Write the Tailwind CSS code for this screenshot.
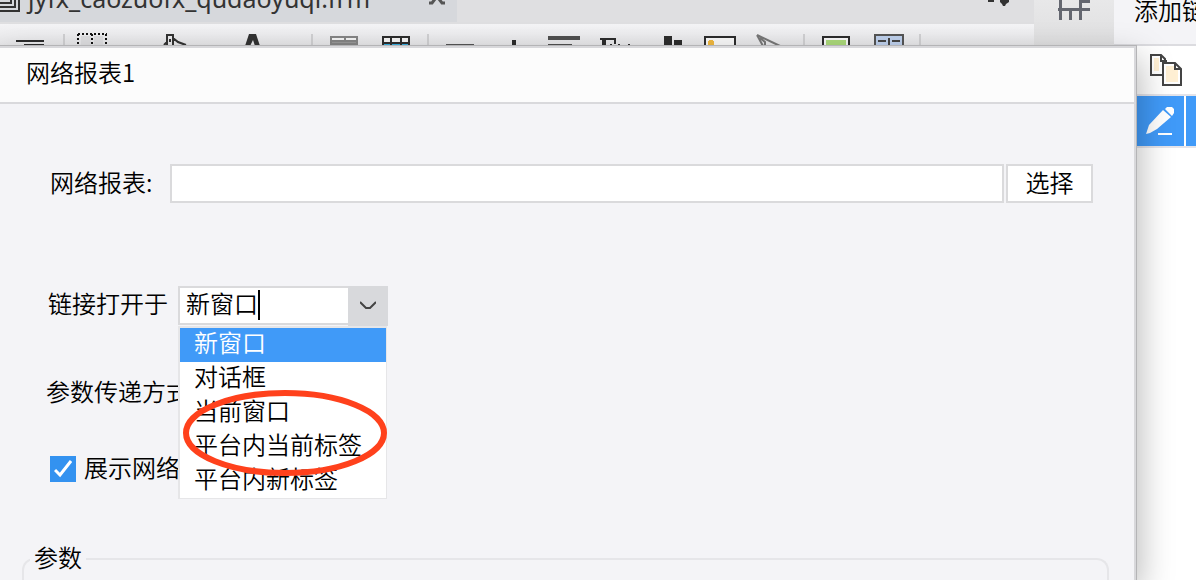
<!DOCTYPE html>
<html lang="zh-CN">
<head>
  <meta charset="UTF-8" />
  <meta name="viewport" content="width=device-width, initial-scale=1.0" />
  <title>网络报表1</title>
  <script src="https://cdn.jsdelivr.net/npm/@tailwindcss/browser@4"></script>
</head>
<body class="relative h-screen overflow-hidden bg-white font-['Noto_Sans_CJK_SC',sans-serif] font-[350] text-2xl leading-8 text-black">

  <!-- Designer window -->
  <div class="flex h-full">
    <main class="flex-1 min-w-0 bg-white">
      <!-- File tabs -->
      <div class="flex h-6 bg-[#dfdfe1] overflow-hidden">
        <div class="flex items-end w-[457px] h-[22px] bg-[#d6d8dc] text-[#333]">
          <svg class="w-5 h-[22px] shrink-0" viewBox="0 0 20 22" fill="none" stroke="#333" stroke-width="2" shape-rendering="crispEdges">
            <path d="M0 11H19V0M0 7H15V0M0 3H11V0" />
          </svg>
          <span class="ml-2 mb-3 text-[25px] leading-6 font-['Noto_Sans'] font-normal">jyfx_caozuofx_qudaoyuqi.frm</span>
          <button class="ml-auto mr-3 h-[22px]" aria-label="关闭">
            <svg class="w-4 h-[22px]" viewBox="0 0 16 22" fill="none" stroke="#555" stroke-width="3"><path d="M0 3H3L6 -1M16 3H13L10 -1" /></svg>
          </button>
        </div>
        <button class="ml-auto mr-6 h-[22px]" aria-label="更多">
          <svg class="w-6 h-[22px]" viewBox="0 0 24 22" fill="#333"><path d="M2 0h6v2H2zM14 0h9v2l-3 2-1 2h-2l-1-2-2-2z" /></svg>
        </button>
      </div>

      <!-- Toolbar -->
      <div class="flex h-[22px] pl-4 overflow-hidden bg-linear-to-b from-[#f4f4f6] to-[#e6e6e8]">
        <button aria-label="右对齐"><svg class="w-7 h-[22px]" viewBox="0 0 28 22" fill="#2d2d2d"><path d="M0 16h28v2H0zM8 20h20v2H8z" /></svg></button>
        <i class="ml-[19px] mt-[10px] w-0.5 bg-[#d0d0d2]"></i>
        <button class="ml-3" aria-label="边框">
          <svg class="w-[30px] h-[22px]" viewBox="0 0 30 22" shape-rendering="crispEdges"><path d="M4 12h10v10H4zM17 12h9v10h-9z" fill="#dedee0" /><path d="M1 10H30M1 10V22M15 10V22M29 10V22" fill="none" stroke="#111" stroke-width="2" stroke-dasharray="2 2" /></svg>
        </button>
        <button class="ml-14" aria-label="背景色">
          <svg class="w-[25px] h-[22px]" viewBox="0 0 25 22" fill="none" stroke="#333" stroke-width="2"><path d="M1 21L4 18V11H10V22M4 18V22M10 14L15 18L23 21" /><path d="M7 15V18" /></svg>
        </button>
        <button class="ml-[57px]" aria-label="字体颜色">
          <svg class="w-4 h-[22px]" viewBox="0 0 16 22" fill="#333"><path d="M4 10h7l4 12h-5l-2-6-3 6H0z" /></svg>
        </button>
        <i class="ml-[50px] mt-[10px] w-0.5 bg-[#d0d0d2]"></i>
        <button class="ml-[17px]" aria-label="合并单元格">
          <svg class="w-7 h-[22px]" viewBox="0 0 28 22"><path d="M0 12h28v10H0z" fill="#858585" /><path d="M2 14h12v2H2zM16 14h10v2H16z" fill="#f4f4f4" /><path d="M2 18h24v1H2z" fill="#999" /></svg>
        </button>
        <button class="ml-6" aria-label="取消合并">
          <svg class="w-7 h-[22px]" viewBox="0 0 28 22"><path d="M0 12h28v10H0z" fill="#2d2d2d" /><path d="M2 14h6v4H2zM10 14h8v4h-8zM20 14h6v4h-6z" fill="#f4f4f4" /><path d="M2 20h6v2H2zM10 20h8v2h-8zM20 20h6v2h-6z" fill="#34aee0" /></svg>
        </button>
        <i class="ml-[17px] mt-[10px] w-0.5 bg-[#d0d0d2]"></i>
        <button class="ml-[17px]" aria-label="横线"><svg class="w-7 h-[22px]" viewBox="0 0 28 22" fill="#555"><path d="M0 20h28v2H0z" /></svg></button>
        <button class="ml-[38px]" aria-label="竖线"><svg class="w-1 h-[22px]" viewBox="0 0 4 22" fill="#2d2d2d"><path d="M0 16h4v6H0z" /></svg></button>
        <button class="ml-8" aria-label="左对齐"><svg class="w-8 h-[22px]" viewBox="0 0 32 22" fill="#505050"><path d="M0 12h32v4H0zM0 20h24v2H0z" /></svg></button>
        <button class="ml-5" aria-label="文本">
          <svg class="w-[30px] h-[22px]" viewBox="0 0 30 22" fill="#2d2d2d"><path d="M0 14h16v6h-2v-4H6v6H2v-6H0zM10 20h2v2h-2zM18 20h2v2h-2zM28 20h2v2h-2z" /></svg>
        </button>
        <button class="ml-[34px]" aria-label="图表"><svg class="w-[18px] h-[22px]" viewBox="0 0 18 22" fill="#2d2d2d"><path d="M0 12h8v10H0zM10 16h8v6h-8z" /></svg></button>
        <button class="ml-[22px]" aria-label="图片">
          <svg class="w-8 h-[22px]" viewBox="0 0 32 22"><path d="M1 24V13H31V24" fill="#f8f8f8" stroke="#2d2d2d" stroke-width="2" /><path d="M5 16h4v1h1v4H9v1H5v-1H4v-4h1z" fill="#f0b840" /></svg>
        </button>
        <button class="ml-5" aria-label="斜线">
          <svg class="w-[26px] h-[22px]" viewBox="0 0 26 22" fill="none" stroke="#777" stroke-width="2"><path d="M1 11L7 22M1 11L24 22M4 14L9 18V22" /></svg>
        </button>
        <i class="ml-[21px] mt-[10px] w-0.5 bg-[#d0d0d2]"></i>
        <button class="ml-[17px]" aria-label="控件">
          <svg class="w-7 h-[22px]" viewBox="0 0 28 22"><path d="M1 24V13H27V24" fill="#f8f8f8" stroke="#2d2d2d" stroke-width="2" /><path d="M4 16h20v6H4z" fill="#abd97a" /></svg>
        </button>
        <button class="ml-6" aria-label="参数面板">
          <svg class="w-[30px] h-[22px]" viewBox="0 0 30 22"><path d="M1 24V11H29V24" fill="#bed0ec" stroke="#555" stroke-width="2" /><path d="M4 16h8v2H4zM18 16h8v2h-8zM14 14h2v8h-2z" fill="#444" /></svg>
        </button>
        <i class="ml-[15px] mt-[10px] w-0.5 bg-[#d0d0d2]"></i>
      </div>
    </main>

    <div class="w-20 shrink-0 h-[46px] bg-linear-to-b from-[#e8e8e9] to-[#dfdfe0]">
      <svg class="ml-6 w-8 h-5" viewBox="0 0 32 20" fill="none" stroke="#646770" stroke-width="3" shape-rendering="crispEdges"><path d="M2 0V20M0 9H32M12 9V20M22 0V20M21 1H32" /></svg>
    </div>

    <!-- Property panel -->
    <aside class="w-[82px] shrink-0 bg-white overflow-hidden">
      <div class="h-[46px] pl-5 border-b-2 border-[#dcdce0] bg-[#f4f4f7] leading-5 whitespace-nowrap">添加链接</div>
      <div class="flex items-center h-12 pl-9">
        <button aria-label="复制">
          <svg class="w-8 h-8" viewBox="0 0 32 32" stroke="#444" stroke-width="2"><path d="M1 1H11L15 5V21H1Z" fill="#fff" /><path d="M4 4h5v13H4z" fill="#fff0d4" stroke="none" /><path d="M11 1V7H17" fill="none" /><path d="M13 9H25L31 15V31H13Z" fill="#fff" /><path d="M16 12h8v4h4v12H16z" fill="#fff0d4" stroke="none" /><path d="M25 9V15H31" fill="none" /></svg>
        </button>
      </div>
      <div class="flex h-[54px] pl-[22px] border-y-2 border-[#e4e4ea]">
        <button class="w-12 bg-[#409af8] flex items-center justify-center" aria-label="编辑">
          <svg class="w-7 h-7" viewBox="0 0 28 28" fill="#fff"><path d="M0 27L3 18L17 3L25 10L11 22L4 26ZM19 2L21 0H26L28 2V6L26 9ZM12 26h14v2H12z" /></svg>
        </button>
        <div class="ml-0.5 flex-1 bg-[#409af8]"></div>
      </div>
    </aside>
  </div>

  <!-- Hyperlink dialog -->
  <div role="dialog" aria-labelledby="dialog-title" class="absolute top-[46px] left-0 right-[60px] bottom-0 flex flex-col border-t-2 border-r-2 border-[#d8d8db] bg-[#f4f4f7] shadow-[0_0_0_1px_#b4b4b6,4px_12px_32px_rgba(0,0,0,0.28)]">
    <header class="flex items-center h-14 shrink-0 pl-[26px] pb-1.5 border-b-2 border-[#d9d9dc] bg-[#fcfcfc]">
      <h1 id="dialog-title">网络报表1</h1>
    </header>

    <form class="flex-1 min-h-0 flex flex-col pl-12 pr-[41px] pt-15">
      <div class="flex items-center h-[39px] shrink-0">
        <label for="report" class="w-[122px] pl-0.5 pb-1 whitespace-nowrap">网络报表:</label>
        <input id="report" type="text" class="flex-1 min-w-0 h-full px-2 border-2 border-[#dadadc] bg-white">
        <button type="button" class="ml-0.5 w-[87px] h-full pb-1 border-2 border-[#dadadc] bg-white leading-8">选择</button>
      </div>

      <div class="flex items-center h-[39px] shrink-0 mt-[83px]">
        <label for="target" class="w-[130px] pb-1.5 whitespace-nowrap">链接打开于</label>
        <div class="relative flex w-[210px] h-full">
          <input id="target" type="text" role="combobox" aria-expanded="true" aria-controls="target-list" value="新窗口" class="w-[170px] h-full pl-1.5 pb-1.5 border-2 border-r-0 border-[#dadadc] bg-white">
          <span class="absolute left-20 top-1 w-0.5 h-[30px] bg-black"></span>
          <button type="button" class="flex-1 h-10 flex items-center justify-center bg-[#d8d9dc]" aria-label="展开">
            <svg class="w-4 h-3" viewBox="0 0 16 12" fill="none" stroke="#444" stroke-width="2"><path d="M0 2L6 8H10L16 2" /></svg>
          </button>
          <ul id="target-list" role="listbox" class="absolute z-10 top-10 left-0 w-[209px] border-l-2 border-r border-b border-t-2 border-[#e6e6e8] bg-white leading-7">
            <li role="option" aria-selected="true" class="h-[34px] pl-3.5 bg-[#409af8] text-white">新窗口</li>
            <li role="option" class="h-[34px] pl-3.5">对话框</li>
            <li role="option" class="h-[34px] pl-3.5">当前窗口</li>
            <li role="option" class="h-[34px] pl-3.5">平台内当前标签</li>
            <li role="option" class="h-[34px] pl-3.5">平台内新标签</li>
          </ul>
          <!-- Marker round the two options -->
          <svg class="absolute z-20 left-1 top-[103px] w-[206px] h-[88px] pointer-events-none" viewBox="0 0 206 88" fill="none" stroke="#ff411c" stroke-width="6"><ellipse cx="103" cy="44" rx="99" ry="40" /></svg>
        </div>
      </div>

      <div class="-ml-0.5 mt-[50px] whitespace-nowrap">参数传递方式</div>

      <div class="relative flex items-center mt-11 pl-0.5">
        <input id="show" type="checkbox" checked class="appearance-none size-[26px] mt-1 bg-[#3392f0]">
        <svg class="absolute left-1.5 top-[9px] w-[18px] h-[18px] pointer-events-none" viewBox="0 0 18 18" fill="none" stroke="#fff" stroke-width="3"><path d="M1 10L6 15L17 1" /></svg>
        <label for="show" class="ml-2 whitespace-nowrap">展示网络</label>
      </div>

      <fieldset class="flex-1 min-h-0 -ml-[26px] -mr-4 mt-[58px] pl-1.5 border-2 border-b-0 border-[#e6e6e9] rounded-t-xl">
        <legend class="px-1 pb-1">参数</legend>
      </fieldset>
    </form>
  </div>
</body>
</html>
